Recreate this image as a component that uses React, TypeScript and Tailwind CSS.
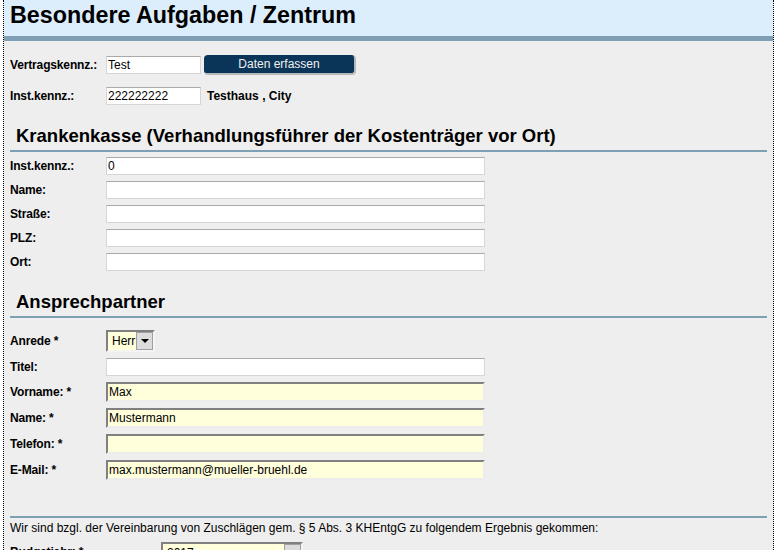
import { ReactNode } from 'react';

const font = "font-['Liberation_Sans',Arial,sans-serif]";

function Label({ children, w = 'w-[96px]' }: { children: ReactNode; w?: string }) {
  return <div className={`${w} shrink-0 text-[12px] font-bold tracking-[-0.15px] text-black`}>{children}</div>;
}

function WhiteInput({ value = '', w = 'w-[379px]' }: { value?: string; w?: string }) {
  return (
    <div className={`${w} h-[18px] bg-white border border-[#d6d6d6] border-t-[#aaaaaa] px-[1px] text-[12px] leading-[16px] text-black`}>
      {value}
    </div>
  );
}

function YellowInput({ value = '' }: { value?: string }) {
  return (
    <div className="w-[379px] h-[20px] bg-[#ffffdc] border-2 border-[#ececec] border-t-[#808080] border-l-[#808080] px-[1px] text-[12px] leading-[16px] text-black">
      {value}
    </div>
  );
}

function Heading({ children }: { children: ReactNode }) {
  return (
    <div className="mt-[20px] border-b-2 border-[#7f9fb4] pb-[4px] pl-[6px]">
      <h2 className="text-[18.5px] leading-[21px] font-bold text-black">{children}</h2>
    </div>
  );
}

function DropArrow() {
  return (
    <div className="w-[17px] h-full bg-[#dcdcdc] border border-[#a0a0a0] flex items-center justify-center">
      <svg width="8" height="5" viewBox="0 0 8 5">
        <path d="M0 0h8L4 4z" fill="#000" />
      </svg>
    </div>
  );
}

export default function App() {
  const kasse = ['Inst.kennz.:', 'Name:', 'Straße:', 'PLZ:', 'Ort:'];

  return (
    <div className={`w-[777px] h-[550px] overflow-hidden bg-white pl-[3px] ${font}`}>
      <div className="w-[771px] h-full bg-[#eeeeee] border-x border-dotted border-black">
        {/* Title bar */}
        <div className="h-[41px] bg-[#dcedfc] border-b-[5px] border-[#7f9fb4] pl-[6px] pt-[2px]">
          <h1 className="text-[23.3px] leading-[27px] font-bold text-black">Besondere Aufgaben / Zentrum</h1>
        </div>

        <div className="px-[6px]">
          {/* Contract row */}
          <div className="mt-[14px] flex items-center h-[20px]">
            <Label>Vertragskennz.:</Label>
            <WhiteInput value="Test" w="w-[95px]" />
            <button className="ml-[3px] w-[152px] h-[20px] rounded-[4px] bg-[#0b3558] border-r-2 border-b-2 border-[#b8b8b8] text-[12px] text-[#f0f0f0] leading-[18px]">
              Daten erfassen
            </button>
          </div>
          <div className="mt-[12px] flex items-center h-[18px]">
            <Label>Inst.kennz.:</Label>
            <WhiteInput value="222222222" w="w-[95px]" />
            <span className="ml-[6px] text-[12px] font-bold text-black">Testhaus , City</span>
          </div>

          <Heading>Krankenkasse (Verhandlungsführer der Kostenträger vor Ort)</Heading>
          <div className="mt-[5px] flex flex-col gap-[6px]">
            {kasse.map((l, i) => (
              <div key={l} className="flex items-center">
                <Label>{l}</Label>
                <WhiteInput value={i === 0 ? '0' : ''} />
              </div>
            ))}
          </div>

          <Heading>Ansprechpartner</Heading>
          <div className="mt-[12px] flex flex-col gap-[6px]">
            <div className="flex items-center">
              <Label>Anrede *</Label>
              <div className="w-[49px] h-[22px] flex bg-[#ffffdc] border-2 border-[#f4f4f4] border-t-[#808080] border-l-[#808080]">
                <div className="flex-1 overflow-hidden pl-[4px] text-[12px] leading-[18px] text-black">Herr</div>
                <DropArrow />
              </div>
            </div>
            <div className="flex items-center">
              <Label>Titel:</Label>
              <WhiteInput />
            </div>
            <div className="flex items-center">
              <Label>Vorname: *</Label>
              <YellowInput value="Max" />
            </div>
            <div className="flex items-center">
              <Label>Name: *</Label>
              <YellowInput value="Mustermann" />
            </div>
            <div className="flex items-center">
              <Label>Telefon: *</Label>
              <YellowInput />
            </div>
            <div className="flex items-center">
              <Label>E-Mail: *</Label>
              <YellowInput value="max.mustermann@mueller-bruehl.de" />
            </div>
          </div>

          {/* Result section */}
          <div className="mt-[36px] border-t-2 border-[#7f9fb4] pt-[3px]">
            <p className="text-[12px] leading-[14px] text-black">
              Wir sind bzgl. der Vereinbarung von Zuschlägen gem. § 5 Abs. 3 KHEntgG zu folgendem Ergebnis gekommen:
            </p>
            <div className="mt-[7px] flex items-start">
              <div className="w-[151px] shrink-0 pt-[3px] text-[12px] leading-[14px] font-bold tracking-[-0.15px] text-black">Budgetjahr: *</div>
              <div className="w-[142px] h-[22px] flex bg-[#ffffdc] border-2 border-[#f4f4f4] border-t-[#808080] border-l-[#808080]">
                <div className="flex-1 pl-[4px] text-[12px] leading-[18px] text-black">2017</div>
                <DropArrow />
              </div>
            </div>
          </div>
        </div>
      </div>
    </div>
  );
}
